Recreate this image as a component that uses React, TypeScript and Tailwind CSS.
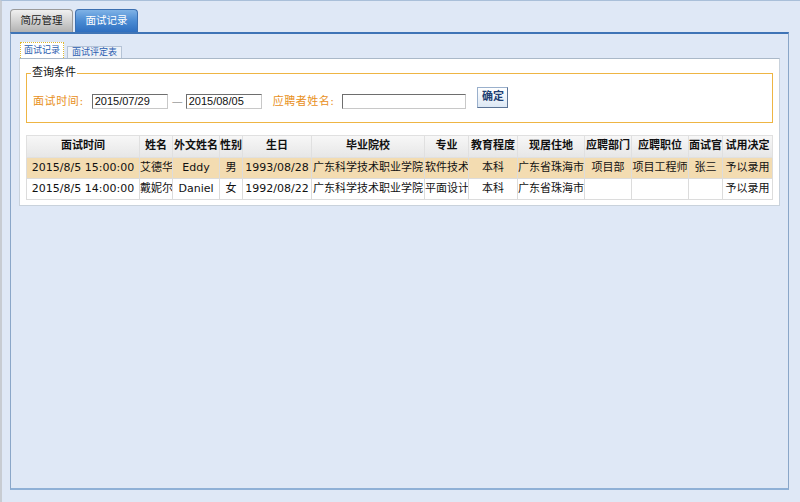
import React from "react";

type Row = {
  time: string;
  name: string;
  enName: string;
  sex: string;
  birth: string;
  school: string;
  major: string;
  edu: string;
  city: string;
  dept: string;
  job: string;
  interviewer: string;
  decision: string;
};

const COLS: { label: string; w: number }[] = [
  { label: "面试时间", w: 113 },
  { label: "姓名", w: 33 },
  { label: "外文姓名", w: 47 },
  { label: "性别", w: 23 },
  { label: "生日", w: 69 },
  { label: "毕业院校", w: 113 },
  { label: "专业", w: 44 },
  { label: "教育程度", w: 49 },
  { label: "现居住地", w: 67 },
  { label: "应聘部门", w: 47 },
  { label: "应聘职位", w: 57 },
  { label: "面试官", w: 34 },
  { label: "试用决定", w: 50 },
];

const ROWS: Row[] = [
  {
    time: "2015/8/5 15:00:00",
    name: "艾德华",
    enName: "Eddy",
    sex: "男",
    birth: "1993/08/28",
    school: "广东科学技术职业学院",
    major: "软件技术",
    edu: "本科",
    city: "广东省珠海市",
    dept: "项目部",
    job: "项目工程师",
    interviewer: "张三",
    decision: "予以录用",
  },
  {
    time: "2015/8/5 14:00:00",
    name: "戴妮尔",
    enName: "Daniel",
    sex: "女",
    birth: "1992/08/22",
    school: "广东科学技术职业学院",
    major: "平面设计",
    edu: "本科",
    city: "广东省珠海市",
    dept: "",
    job: "",
    interviewer: "",
    decision: "予以录用",
  },
];

const cjk = "font-['DejaVu_Sans','Noto_Sans_CJK_SC',sans-serif]";

function TopTab({ label, active }: { label: string; active?: boolean }) {
  return (
    <div
      className={
        active
          ? "w-[63px] h-[23px] rounded-t-[4px] border border-b-0 border-[#3c6fb0] bg-gradient-to-b from-[#7fb2e6] via-[#4a8bd3] to-[#2f6fc0] text-white text-[10.5px] flex items-center justify-center"
          : "w-[63px] h-[23px] rounded-t-[4px] border border-b-0 border-[#9a9a9a] bg-gradient-to-b from-[#f0f0f0] via-[#d2d2d2] to-[#b2b2b2] text-[#222] text-[10.5px] flex items-center justify-center"
      }
    >
      {label}
    </div>
  );
}

export default function App() {
  const cells = (r: Row) => [
    r.time,
    r.name,
    r.enName,
    r.sex,
    r.birth,
    r.school,
    r.major,
    r.edu,
    r.city,
    r.dept,
    r.job,
    r.interviewer,
    r.decision,
  ];

  return (
    <div className={`w-[800px] h-[502px] bg-[#dfe8f6] border-t border-[#a9bfd9] border-l-2 border-l-[#c8ccd2] overflow-hidden ${cjk}`}>
      <div className="pl-[8px] pt-[8px]">
        {/* top tabs */}
        <div className="flex gap-[2px] items-end h-[23px]">
          <TopTab label="简历管理" />
          <TopTab label="面试记录" active />
        </div>

        {/* tab body */}
        <div className="w-[779px] h-[458px] border-t-2 border-t-[#3f74b6] border-x border-x-[#8aa6c8] border-b-2 border-b-[#8fb0d6] bg-[#dfe8f6] px-[8px] pt-[8px]">
          {/* sub tabs */}
          <div className="flex items-end gap-[3px] pl-[1px] h-[16px]">
            <div className="h-[16px] px-[3px] bg-white border border-dotted border-[#e2b830] border-b-0 text-[9px] text-[#2a5db0] flex items-center">
              面试记录
            </div>
            <div className="h-[12px] px-[4px] bg-[#eef2f8] border border-[#b5c3d6] border-b-0 text-[9px] text-[#2a5db0] flex items-center">
              面试评定表
            </div>
          </div>

          {/* white content */}
          <div className="w-[761px] h-[148px] bg-white border border-[#c9d2dc] border-t-[#aab8c8] px-[6px] pt-[7px]">
            <fieldset className="border border-[#eeb544] px-[6px] pb-[13px] m-0">
              <legend className="px-[1px] ml-[-2px] text-[11px] leading-[14px] text-[#111]">查询条件</legend>
              <div className="flex items-end pt-[7px]">
                <span className="text-[11px] leading-[15px] text-[#e88f1a] mr-[8px] tracking-[0.6px]">面试时间:</span>
                <div className="w-[76px] h-[15px] border border-[#6e6e6e] border-r-[#c8c8c8] border-b-[#c8c8c8] text-[11px] leading-[13px] pl-[2px] font-['Liberation_Sans',sans-serif] text-[#111]">
                  2015/07/29
                </div>
                <span className="text-[11px] leading-[15px] text-[#999] ml-[4px] mr-[3px]">—</span>
                <div className="w-[76px] h-[15px] border border-[#6e6e6e] border-r-[#c8c8c8] border-b-[#c8c8c8] text-[11px] leading-[13px] pl-[2px] font-['Liberation_Sans',sans-serif] text-[#111]">
                  2015/08/05
                </div>
                <span className="text-[11px] leading-[15px] text-[#e88f1a] ml-[11px] mr-[8px] tracking-[0.5px]">应聘者姓名:</span>
                <div className="w-[124px] h-[15px] border border-[#6e6e6e] border-r-[#c8c8c8] border-b-[#c8c8c8]" />
                <button className="ml-[11px] mb-[1px] w-[31px] h-[21px] border border-[#5b7395] border-t-[#9ab0cc] border-l-[#9ab0cc] bg-gradient-to-b from-[#ffffff] to-[#dde8f4] text-[11px] font-bold text-[#1f3f73] flex items-center justify-center">
                  确定
                </button>
              </div>
            </fieldset>

            <table className="mt-[12px] border-collapse table-fixed w-[746px] text-[11px] text-[#111]">
              <colgroup>
                {COLS.map((c) => (
                  <col key={c.label} style={{ width: c.w }} />
                ))}
              </colgroup>
              <thead>
                <tr className="h-[22px] bg-gradient-to-b from-[#f7f7f7] to-[#e6e6e6]">
                  {COLS.map((c) => (
                    <th
                      key={c.label}
                      className="border border-[#e0e0e0] p-0 font-bold text-center whitespace-nowrap"
                    >
                      {c.label}
                    </th>
                  ))}
                </tr>
              </thead>
              <tbody>
                {ROWS.map((r, i) => (
                  <tr key={r.time} className={i === 0 ? "h-[21px] bg-[#f3dcb1]" : "h-[21px] bg-white"}>
                    {cells(r).map((v, j) => (
                      <td
                        key={j}
                        className="border border-[#dcdcdc] p-0 text-center whitespace-nowrap overflow-hidden"
                      >
                        {v}
                      </td>
                    ))}
                  </tr>
                ))}
              </tbody>
            </table>
          </div>
        </div>
      </div>
    </div>
  );
}
